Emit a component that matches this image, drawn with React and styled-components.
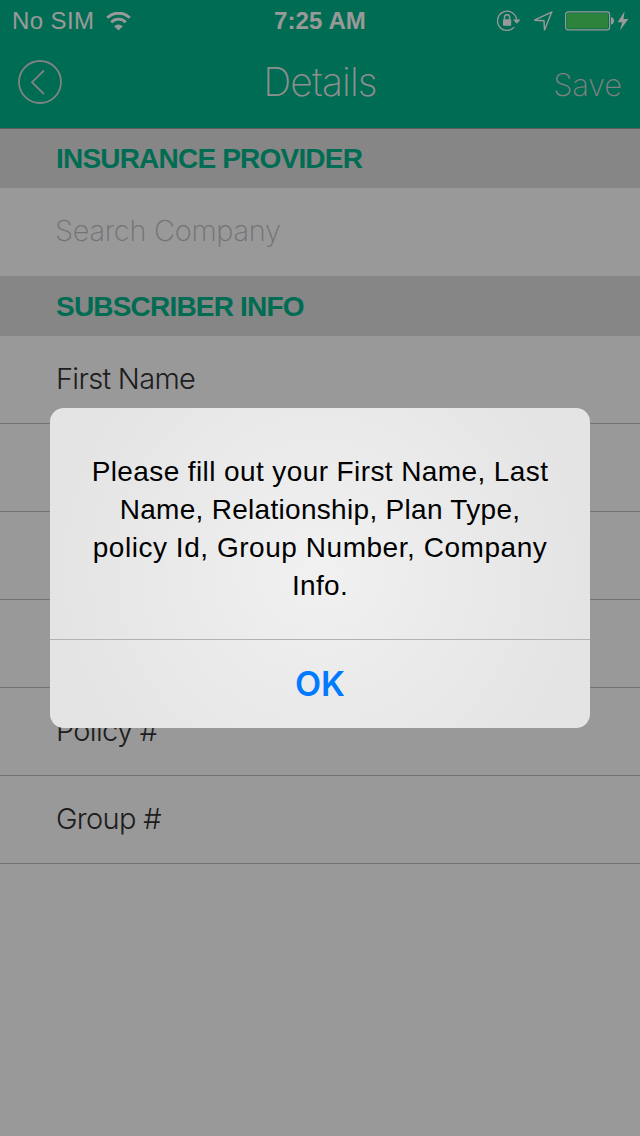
import React from "react";
import styled, { createGlobalStyle } from "styled-components";

const GlobalStyle = createGlobalStyle`
  * { box-sizing: border-box; }
  body { margin: 0; background: #fff; }
`;

const Screen = styled.main`
  position: relative;
  width: 640px;
  height: 1136px;
  overflow: hidden;
  background: #fff;
  font-family: Inter, "Liberation Sans", sans-serif;
`;

const Header = styled.header`
  height: 129px;
  background: #00b48a;
  border-bottom: 1px solid #9a9a9a;
  color: #fff;
`;

const StatusBar = styled.div`
  height: 40px;
  display: grid;
  grid-template-columns: 1fr auto 1fr;
  align-items: center;
  padding: 0 11px 0 12px;
  font-family: "Liberation Sans", Arial, sans-serif;
  font-size: 24px;
  line-height: 42px;
`;

const Carrier = styled.div`
  display: flex;
  align-items: center;
  gap: 12px;
  letter-spacing: 0.4px;
`;

const Clock = styled.div`
  font-weight: 700;
  font-size: 24px;
  letter-spacing: 0.1px;
  margin-left: -1px;
`;

const StatusIcons = styled.div`
  display: flex;
  justify-content: flex-end;
  align-items: center;
`;

const NavBar = styled.nav`
  height: 88px;
  display: grid;
  grid-template-columns: 1fr auto 1fr;
  align-items: center;
  padding: 0 18px;
  color: #eee;
`;

const BackButton = styled.button`
  width: 44px;
  height: 44px;
  margin-top: -4px;
  padding: 0;
  border: 0;
  background: none;
  color: #d4dcd9;
  svg { display: block; }
`;

const Title = styled.h1`
  margin: -4px 0 0;
  font-weight: 250;
  font-size: 39px;
  line-height: 48px;
  letter-spacing: -0.85px;
`;

const SaveButton = styled.button`
  justify-self: end;
  margin-top: 2px;
  padding: 0;
  border: 0;
  background: none;
  color: #d0d8d5;
  font: 250 31px/40px Inter, sans-serif;
  letter-spacing: -0.2px;
`;

const SectionTitle = styled.h2`
  height: ${(p) => (p.$first ? 59 : 60)}px;
  margin: 0;
  padding-left: 56px;
  background: #dfdfdf;
  color: #00b48a;
  font: 700 28px/${(p) => (p.$first ? 60 : 62)}px "Liberation Sans", Arial, sans-serif;
  letter-spacing: -0.8px;
`;

const Field = styled.div`
  height: 88px;
  padding-left: ${(p) => (p.$plain ? 55 : 56)}px;
  border-bottom: ${(p) => (p.$plain ? "0" : "1px solid #c0c0c0")};
  color: ${(p) => (p.$plain ? "#c0c0c6" : "#333")};
  font-weight: ${(p) => (p.$plain ? 250 : 300)};
  font-size: 29px;
  line-height: 86px;
  letter-spacing: ${(p) => (p.$plain ? -0.3 : -0.7)}px;
`;

const Overlay = styled.div`
  position: absolute;
  inset: 0;
  display: flex;
  align-items: center;
  justify-content: center;
  background: rgba(0, 0, 0, 0.4);
`;

const Dialog = styled.div`
  width: 540px;
  height: 320px;
  border-radius: 14px;
  overflow: hidden;
  background: radial-gradient(circle 270px at 50% 50%, #f1f1f1 0%, #eaeaea 50%, #e4e4e4 100%);
  font-family: "Liberation Sans", Arial, sans-serif;
  text-align: center;
`;

const Message = styled.p`
  height: 232px;
  margin: 0;
  padding-top: 45px;
  border-bottom: 1px solid #b2b2b2;
  color: #000;
  font-size: 28px;
  line-height: 38px;
`;

const Line = styled.span`
  display: block;
  letter-spacing: ${(p) => p.$spacing}px;
`;

const OkButton = styled.button`
  width: 100%;
  height: 88px;
  padding: 0;
  border: 0;
  background: none;
  color: #007aff;
  font: 600 34px/88px Inter, sans-serif;
`;

const WifiIcon = () => (
  <svg width="25" height="19" viewBox="0 0 25 19" fill="none" stroke="currentColor">
    <path d="M1.2 5.8a16 16 0 0 1 22.6 0" strokeWidth="3" />
    <path d="M5.2 10.2a10.3 10.3 0 0 1 14.6 0" strokeWidth="2.8" />
    <path d="M12.5 18.5 8.2 14.2a6.1 6.1 0 0 1 8.6 0z" fill="currentColor" stroke="none" />
  </svg>
);

const LockIcon = () => (
  <svg width="24" height="22" viewBox="0 0 24 22" fill="none" stroke="currentColor">
    <path d="M17.3 17.1A9.6 9.6 0 1 1 19.6 9.5" strokeWidth="1.4" />
    <path d="M16 9.5h7.6L19.8 13.8z" fill="currentColor" stroke="none" />
    <rect x="6" y="9.3" width="8.2" height="6.4" rx=".7" fill="currentColor" stroke="none" />
    <path d="M7.5 9.5V7.3a2.6 2.6 0 0 1 5.2 0v2.2" strokeWidth="1.4" />
  </svg>
);

const LocationIcon = () => (
  <svg width="20" height="21" viewBox="0 0 20 21" fill="none" stroke="currentColor" strokeWidth="1.4">
    <path d="M18.6 1.2 1.4 9.2l9.6.5.5 9.6z" />
  </svg>
);

const BatteryIcon = () => (
  <svg width="50" height="20" viewBox="0 0 50 20">
    <rect x=".6" y=".8" width="44" height="18" rx="2.6" fill="none" stroke="currentColor" strokeWidth="1.2" />
    <rect x="2" y="2.2" width="41.2" height="15.4" rx="1.4" fill="#4cd964" />
    <path d="M46 6.2c4 0 4 7.2 0 7.2z" fill="currentColor" />
  </svg>
);

const BoltIcon = () => (
  <svg width="12" height="20" viewBox="0 0 12 20" fill="currentColor">
    <path d="M7.6.3.6 11.2h4.6L3 19.4 11.4 8H6.5z" />
  </svg>
);

const BackIcon = () => (
  <svg width="44" height="44" viewBox="0 0 44 44" fill="none" stroke="currentColor">
    <circle cx="22" cy="22" r="21" strokeWidth="1.8" />
    <path d="M26 10.5 14 22.2 26 34.2" strokeWidth="1.8" />
  </svg>
);

const Spacer = styled.span`
  width: ${(p) => p.$w}px;
`;

const rows = ["First Name", "", "", "", "Policy #", "Group #"];

const message = [
  ["Please fill out your First Name, Last", 0.4],
  ["Name, Relationship, Plan Type,", 0.3],
  ["policy Id, Group Number, Company", 0.54],
  ["Info.", 0.3],
];

export default function App() {
  return (
    <Screen>
      <GlobalStyle />
      <Header>
        <StatusBar>
          <Carrier>
            No SIM <WifiIcon />
          </Carrier>
          <Clock>7:25 AM</Clock>
          <StatusIcons>
            <LockIcon />
            <Spacer $w={12} />
            <LocationIcon />
            <Spacer $w={12} />
            <BatteryIcon />
            <Spacer $w={2} />
            <BoltIcon />
          </StatusIcons>
        </StatusBar>
        <NavBar>
          <BackButton aria-label="Back">
            <BackIcon />
          </BackButton>
          <Title>Details</Title>
          <SaveButton>Save</SaveButton>
        </NavBar>
      </Header>
      <SectionTitle $first>INSURANCE PROVIDER</SectionTitle>
      <Field $plain>Search Company</Field>
      <SectionTitle>SUBSCRIBER INFO</SectionTitle>
      {rows.map((label, i) => (
        <Field key={i}>{label}</Field>
      ))}
      <Overlay>
        <Dialog role="alertdialog">
          <Message>
            {message.map(([text, spacing]) => (
              <Line key={text} $spacing={spacing}>
                {text}
              </Line>
            ))}
          </Message>
          <OkButton>OK</OkButton>
        </Dialog>
      </Overlay>
    </Screen>
  );
}
